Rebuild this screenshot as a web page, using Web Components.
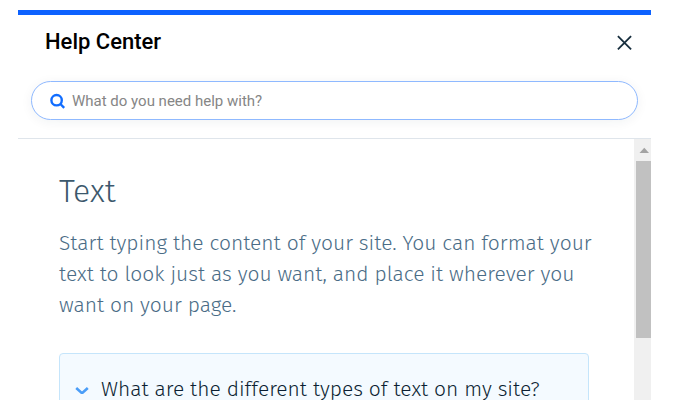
<!DOCTYPE html>
<html lang="en">
<head>
<meta charset="utf-8">
<meta name="viewport" content="width=device-width, initial-scale=1">
<title>Help Center</title>
<style>
  html, body { height: 100%; margin: 0; }
  body { background: #fff; overflow: hidden; font-family: Roboto, "Liberation Sans", sans-serif; }
</style>
</head>
<body>
<help-panel heading="Help Center">
  <help-search slot="search" placeholder="What do you need help with?"></help-search>
  <help-article heading="Text">
    Start typing the content of your site. You can format your text to look just as you want, and place it wherever you want on your page.
    <help-question slot="questions">What are the different types of text on my site?</help-question>
  </help-article>
</help-panel>

<script>
(function () {
  // attach an open root and fill it; returns the root
  function shadow(host, html) {
    var root = host.attachShadow({ mode: "open" });
    root.innerHTML = html;
    return root;
  }

  // panel: header, search slot, scrolling body
  class HelpPanel extends HTMLElement {
    connectedCallback() {
      if (this.shadowRoot) return;
      var root = shadow(this,
        "<style>" +
          ":host{display:flex;flex-direction:column;box-sizing:border-box;height:100%;padding:10px 24px 0 18px}" +
          "header{border-top:5px solid #0d62ff;border-bottom:1px solid #dfe5eb;padding:14px 13px 18px}" +
          ".bar{display:flex;align-items:center;justify-content:space-between;padding:0 4px 0 14px;margin-bottom:26px}" +
          "h1{margin:0;font-size:22px;line-height:26px;font-weight:500;color:#000}" +
          "button{display:flex;border:0;padding:0;background:none;cursor:pointer}" +
          ".body{flex:1;min-height:0;display:flex}" +
          "main{flex:1;min-width:0;overflow:hidden}" +
        "</style>" +
        "<header>" +
          '<div class="bar"><h1></h1>' +
            '<button type="button" aria-label="Close"><svg width="20" height="20" viewBox="0 0 20 20" fill="none" stroke="#162d3d" stroke-width="1.8"><path d="M3.9 4.1 17.1 17.3M17.1 4.1 3.9 17.3"></path></svg></button>' +
          "</div>" +
          '<slot name="search"></slot>' +
        "</header>" +
        '<div class="body"><main><slot></slot></main><help-scrollbar></help-scrollbar></div>');
      root.querySelector("h1").textContent = this.getAttribute("heading") || "";
    }
  }

  class HelpSearch extends HTMLElement {
    connectedCallback() {
      if (this.shadowRoot) return;
      var root = shadow(this,
        "<style>" +
          ":host{display:block}" +
          "label{display:flex;align-items:center;gap:6px;box-sizing:border-box;height:39px;padding:0 18px;border:1px solid #8fb9ff;border-radius:20px;background:#fff;box-shadow:0 2px 12px rgba(22,45,61,.06)}" +
          "svg{flex:none}" +
          "input{flex:1;min-width:0;border:0;padding:0;outline:0;background:none;font:400 15px/22px Roboto,'Liberation Sans',sans-serif;color:#162d3d}" +
          "input::placeholder{color:#868686;opacity:1}" +
        "</style>" +
        '<label><svg width="16" height="16" viewBox="0 0 16 16" fill="none" stroke="#116dff" stroke-width="2.4" aria-hidden="true"><circle cx="6.6" cy="7.2" r="5.2"></circle><path d="M10.4 11 14.2 14.8"></path></svg>' +
        '<input type="text" aria-label="Search"></label>');
      root.querySelector("input").placeholder = this.getAttribute("placeholder") || "";
    }
  }

  class HelpArticle extends HTMLElement {
    connectedCallback() {
      if (this.shadowRoot) return;
      var root = shadow(this,
        "<style>" +
          ":host{display:block;padding:32px 41px 0}" +
          "h2{margin:0 0 17px;font:300 32px/40px 'Fira Sans','Open Sans',sans-serif;color:#3c586c}" +
          "p{margin:0 0 32px;font:300 21px/31px 'Fira Sans','Noto Sans',sans-serif;color:#4a6c86}" +
          "slot[name=questions]{display:block;padding-right:4px}" +
        "</style>" +
        '<h2></h2><p><slot></slot></p><slot name="questions"></slot>');
      root.querySelector("h2").textContent = this.getAttribute("heading") || "";
    }
  }

  // collapsed question row
  class HelpQuestion extends HTMLElement {
    connectedCallback() {
      if (this.shadowRoot) return;
      shadow(this,
        "<style>" +
          ":host{display:block;border:1px solid #c5e5fb;border-radius:4px;background:#f4faff}" +
          "button{display:flex;align-items:center;gap:12px;width:100%;border:0;padding:19px 15px;background:none;text-align:left;white-space:nowrap;font:300 21px/32px 'Fira Sans','Noto Sans',sans-serif;color:#0c1f33;cursor:pointer}" +
          "svg{flex:none}" +
        "</style>" +
        '<button type="button" aria-expanded="false"><svg width="14" height="10" viewBox="0 0 14 10" fill="none" stroke="#4a9df8" stroke-width="2.6" aria-hidden="true"><path d="M1.2 4 7 9.2 12.8 4"></path></svg><span><slot></slot></span></button>');
    }
  }

  class HelpScrollbar extends HTMLElement {
    connectedCallback() {
      if (this.shadowRoot) return;
      shadow(this,
        "<style>" +
          ":host{display:block;flex:none;box-sizing:border-box;width:17px;padding-left:2px;background:#f0f0f0}" +
          "svg{display:block}" +
          ".thumb{height:68%;background:#c1c1c1}" +
        "</style>" +
        '<svg width="15" height="22" viewBox="0 0 15 22" aria-hidden="true"><path d="M3.5 14 8.3 8.8 13 14Z" fill="#a3a3a3"></path></svg>' +
        '<div class="thumb"></div>');
    }
  }

  customElements.define("help-scrollbar", HelpScrollbar);
  customElements.define("help-question", HelpQuestion);
  customElements.define("help-article", HelpArticle);
  customElements.define("help-search", HelpSearch);
  customElements.define("help-panel", HelpPanel);
})();
</script>
</body>
</html>
